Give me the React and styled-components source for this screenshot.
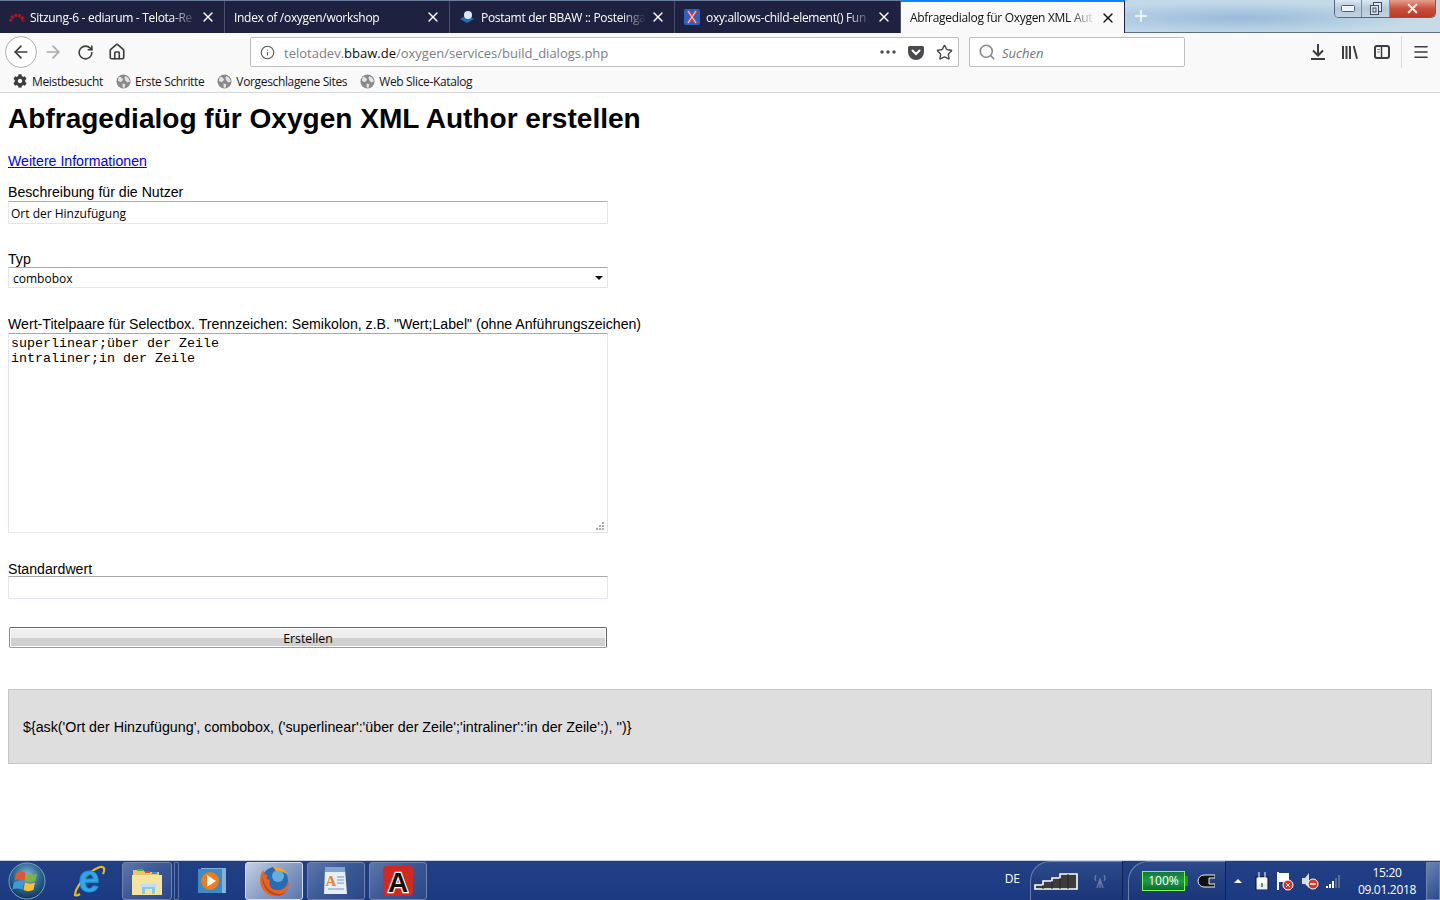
import React from 'react';
import styled, { createGlobalStyle } from 'styled-components';
import { ArrowLeft, ArrowRight, RotateCw, Home, Info, Star, Search, Menu, X, Plus } from 'lucide-react';
import { FaCog } from 'react-icons/fa';

const Global = createGlobalStyle`
    html, body { margin: 0; padding: 0; height: 100%; overflow: hidden; background: #fff; }
    #root { height: 100%; }
    * { box-sizing: border-box; }
`;

const uiFont = `"Open Sans", "Noto Sans", sans-serif`;
const pageFont = `"Liberation Sans", Arial, sans-serif`;

const Screen = styled.div`
    height: 900px;
    width: 1440px;
    display: flex;
    flex-direction: column;
    position: relative;
    overflow: hidden;
    font-family: ${pageFont};
`;

/* ---------- tab strip ---------- */
const TabStrip = styled.div`
    height: 33px;
    flex: none;
    display: flex;
    background:
        radial-gradient(ellipse 180px 16px at 1240px 18px, rgba(120,160,205,.55), transparent),
        linear-gradient(90deg, #a9c9e8 0%, #bcd6ec 60%, #c6dbe6 100%);
    border-bottom: 1px solid #5d6b8c;
`;
const TabRow = styled.div`
    display: flex;
    background: #1e2240;
    border-top: 1px solid #6b7d9d;
    height: 33px;
`;
const Tab = styled.div`
    width: ${p => p.$w || 225}px;
    height: ${p => (p.$active ? 33 : 32)}px;
    margin-top: ${p => (p.$active ? -1 : 0)}px;
    display: flex;
    align-items: center;
    padding: 0 8px 0 9px;
    font-family: ${uiFont};
    font-size: 12px;
    letter-spacing: -0.3px;
    color: ${p => (p.$active ? '#111' : '#fff')};
    background: ${p => (p.$active ? '#f9f9fa' : 'transparent')};
    border-top: ${p => (p.$active ? '2px solid #0a84ff' : 'none')};
    border-right: 1px solid ${p => (p.$active ? '#1e2240' : '#4a4f6c')};
`;
const TabFav = styled.span`
    width: 16px;
    height: 16px;
    flex: none;
    margin-right: ${p => p.$mr || 5}px;
    display: flex;
    align-items: center;
    justify-content: center;
`;
const TabTitle = styled.span`
    flex: 1;
    min-width: 0;
    overflow: hidden;
    white-space: nowrap;
    -webkit-mask-image: linear-gradient(90deg, #000 85%, transparent 100%);
    mask-image: linear-gradient(90deg, #000 85%, transparent 100%);
`;
const TabClose = styled(X)`
    flex: none;
    margin-left: 4px;
    color: ${p => (p.$dark ? '#111' : '#fff')};
`;
const NewTab = styled(Plus)`
    color: #fff;
    margin: 7px 0 0 7px;
`;
const WindowButtons = styled.div`
    position: absolute;
    top: 0;
    right: 4px;
    width: 102px;
    height: 18px;
    display: flex;
    border: 1px solid #56687f;
    border-top: none;
    border-radius: 0 0 5px 5px;
    overflow: hidden;
`;
const WinBtn = styled.div`
    height: 100%;
    width: ${p => p.$w}px;
    display: flex;
    align-items: center;
    justify-content: center;
    border-right: 1px solid #7b8da3;
    background: ${p => (p.$close
        ? 'linear-gradient(#e5a08e, #c9503c 50%, #b93b28)'
        : 'linear-gradient(#dbe7f2, #b6c8d9 50%, #c3d3e1)')};
    &:last-child { border-right: none; }
`;

/* ---------- toolbar ---------- */
const NavBar = styled.div`
    height: 35px;
    flex: none;
    display: flex;
    align-items: center;
    background: #f9f9fa;
    padding-top: 3px;
`;
const NavButtons = styled.div`
    width: 250px;
    flex: none;
    display: flex;
    align-items: center;
    padding-left: 5px;
    color: #3d3d3f;
`;
const BackBtn = styled.div`
    width: 32px;
    height: 32px;
    border: 1px solid #b1b1b3;
    border-radius: 50%;
    background: #fff;
    display: flex;
    align-items: center;
    justify-content: center;
`;
const NavIcon = styled.div`
    width: 32px;
    height: 32px;
    display: flex;
    align-items: center;
    justify-content: center;
    color: ${p => (p.$off ? '#a9a9ab' : 'inherit')};
`;
const Field = styled.div`
    height: 30px;
    width: ${p => p.$w}px;
    flex: none;
    background: #fff;
    border: 1px solid #bebebf;
    border-radius: 2px;
    display: flex;
    align-items: center;
    font-family: ${uiFont};
    font-size: 13px;
    color: #3d3d3f;
`;
const UrlInfo = styled(Info)`
    margin: 0 9px 0 9px;
    color: #555;
    flex: none;
`;
const UrlText = styled.div`
    flex: 1;
    padding-top: 2px;
    color: #7d7d85;
    white-space: nowrap;
    b { font-weight: 400; color: #0c0c0d; }
`;
const UrlAction = styled.div`
    width: 28px;
    display: flex;
    justify-content: center;
    color: #4a4a4f;
`;
const SearchBar = styled(Field)`
    margin-left: 10px;
    padding-left: 8px;
    font-style: italic;
    color: #73737b;
    gap: 6px;
`;
const SearchLabel = styled.span`
    padding-top: 2px;
`;
const RightIcons = styled.div`
    flex: 1;
    display: flex;
    align-items: center;
    padding-left: 117px;
    color: #3d3d3f;
`;
const RightIcon = styled.div`
    width: 32px;
    display: flex;
    justify-content: center;
`;
const ToolSep = styled.div`
    width: 1px;
    height: 32px;
    background: #dcdcde;
    margin: 0 3px;
`;

/* ---------- bookmarks ---------- */
const Bookmarks = styled.div`
    height: 25px;
    flex: none;
    display: flex;
    align-items: center;
    gap: 13px;
    padding: 2px 0 0 13px;
    background: #f9f9fa;
    border-bottom: 1px solid #d9d9db;
    font-family: ${uiFont};
    font-size: 12px;
    letter-spacing: -0.35px;
    color: #16161a;
`;
const Mark = styled.div`
    display: flex;
    align-items: center;
    gap: 4px;
`;
const GearMark = styled(Mark)`
    gap: 5px;
`;

/* ---------- page ---------- */
const Page = styled.main`
    flex: 1;
    min-height: 0;
    padding: 9px 8px 8px;
    font-size: 14.15px;
    color: #000;
    background: #fff;
`;
const Heading = styled.h1`
    margin: 0 0 18px;
    font-size: 28.05px;
    line-height: 33px;
    font-weight: 700;
`;
const MoreLink = styled.a`
    display: block;
    color: #0000ee;
    text-decoration: underline;
    line-height: 17px;
    margin-bottom: 14px;
`;
const Label = styled.label`
    display: block;
    line-height: 17px;
    height: ${p => p.$h || 17}px;
    margin-top: ${p => p.$gap || 0}px;
`;
const fieldBorder = `
    border: 1px solid #e3e6ec;
    border-top-color: #a9a9ad;
    border-left-color: #e3e6ec;
    border-radius: 1px;
    background: #fff;
    outline: none;
`;
const TextInput = styled.input`
    display: block;
    width: 600px;
    height: 23px;
    padding: 2px 2px 0;
    font-family: ${uiFont};
    font-size: 12px;
    color: #000;
    ${fieldBorder}
`;
const Combo = styled.div`
    width: 600px;
    height: 21px;
    padding: 1px 4px 0;
    display: flex;
    align-items: center;
    justify-content: space-between;
    font-family: ${uiFont};
    font-size: 12px;
    color: #000;
    ${fieldBorder}
`;
const ComboArrow = styled.span`
    width: 0;
    height: 0;
    border-left: 4px solid transparent;
    border-right: 4px solid transparent;
    border-top: 4px solid #111;
`;
const Area = styled.textarea`
    display: block;
    width: 600px;
    height: 200px;
    padding: 2px;
    resize: both;
    font-family: "Liberation Mono", "Courier New", monospace;
    font-size: 13.33px;
    line-height: 15px;
    color: #000;
    ${fieldBorder}
    &::-webkit-resizer {
        background-color: #fff;
        background-repeat: no-repeat;
        background-size: 2px 2px;
        background-image:
            linear-gradient(#aaa, #aaa), linear-gradient(#aaa, #aaa), linear-gradient(#aaa, #aaa),
            linear-gradient(#aaa, #aaa), linear-gradient(#aaa, #aaa), linear-gradient(#aaa, #aaa);
        background-position: 10px 5px, 10px 8px, 10px 11px, 7px 8px, 7px 11px, 4px 11px;
    }
`;
const SubmitBtn = styled.button`
    display: block;
    width: 598px;
    height: 21px;
    margin: 28px 0 0 1px;
    padding: 1px 0 0;
    border: 1px solid #666;
    border-left-color: #8c8c8c;
    border-bottom-color: #9a9a9a;
    border-radius: 2px;
    box-shadow: inset 0 0 0 1px #fff;
    background: linear-gradient(#f1f1f1 0%, #ececec 50%, #d2d2d2 50%, #cdcdcd 100%);
    font-family: ${uiFont};
    font-size: 12.3px;
    color: #000;
`;
const Result = styled.div`
    height: 75px;
    margin-top: 41px;
    padding: 0 14px;
    display: flex;
    align-items: center;
    font-size: 14.25px;
    background: #dedede;
    border: 1px solid #c6c6c6;
`;

/* ---------- taskbar ---------- */
const Taskbar = styled.footer`
    height: 40px;
    flex: none;
    display: flex;
    align-items: center;
    position: relative;
    border-top: 1px solid #c9d3e2;
    background: linear-gradient(#223f83, #1f3d85 50%, #1c3a82);
    color: #fff;
    font-family: ${uiFont};
`;
const Orb = styled.div`
    width: 38px;
    height: 38px;
    margin-left: 8px;
    flex: none;
`;
const Loose = styled.div`
    width: 38px;
    display: flex;
    justify-content: center;
    margin-left: ${p => p.$ml}px;
    flex: none;
`;
const TaskBtn = styled.div`
    width: ${p => p.$w || 58}px;
    height: 38px;
    margin-left: ${p => p.$ml || 4}px;
    flex: none;
    display: flex;
    align-items: center;
    justify-content: center;
    border: 1px solid ${p => (p.$active ? '#d6deec' : '#6f83ae')};
    border-radius: 3px;
    background: ${p => (p.$active
        ? 'linear-gradient(135deg, #c3cfe4 0%, #8fa3c8 45%, #5a76ad 100%)'
        : 'linear-gradient(135deg, #5d77ab 0%, #3e5a97 45%, #2a4889 100%)')};
`;
const Divider = styled.div`
    width: 5px;
    height: 38px;
    margin-left: 2px;
    flex: none;
    border: 1px solid #5c73a3;
    border-radius: 1px;
`;
const TrayArea = styled.div`
    margin-left: auto;
    display: flex;
    align-items: center;
    height: 100%;
`;
const Lang = styled.div`
    font-size: 12px;
    margin-right: 10px;
    padding-bottom: 5px;
`;
const Gadget = styled.div`
    width: ${p => p.$w}px;
    height: 39px;
    margin-right: ${p => p.$mr || 0}px;
    display: flex;
    align-items: center;
    padding-left: ${p => p.$pl}px;
    gap: ${p => p.$gap || 0}px;
    border-left: 1px solid #6c80a8;
    border-right: 1px solid #10224f;
    border-top: 1px solid #6c80a8;
    border-radius: 20px 0 0 0;
    background: linear-gradient(180deg, #2d4a8b, #1a3578);
`;
const Battery = styled.div`
    width: 43px;
    height: 20px;
    flex: none;
    border: 1px solid #74ff3a;
    background: linear-gradient(#0f7a3a, #1d9b4e 50%, #0c6a30);
    font-size: 12px;
    text-align: center;
    line-height: 18px;
    color: #fff;
    position: relative;
    &::after {
        content: '';
        position: absolute;
        right: -4px;
        top: 4px;
        width: 3px;
        height: 10px;
        background: #2a8f2a;
    }
`;
const TrayIcons = styled.div`
    display: flex;
    align-items: center;
    gap: 7px;
    width: 122px;
    padding-left: 8px;
`;
const Clock = styled.div`
    width: 78px;
    text-align: center;
    font-size: 12px;
    line-height: 17px;
    letter-spacing: -0.3px;
`;
const ShowDesktop = styled.div`
    width: 14px;
    height: 38px;
    border: 1px solid #6f83ae;
    background: linear-gradient(135deg, #6b84b4, #2d4a8c);
`;
const TrayUp = styled.span`
    width: 0;
    height: 0;
    margin-right: 6px;
    border-left: 4px solid transparent;
    border-right: 4px solid transparent;
    border-bottom: 4px solid #fff;
`;

/* ---------- drawn icons ---------- */
const Globe = () => (
    <svg width="15" height="15" viewBox="0 0 16 16">
        <circle cx="8" cy="8" r="7.5" fill="#8a8a8c" />
        <path d="M3 3c2 0 3 1 4 2s0 2-1 3-3 0-4-1zM10 2l3 2 2 4-3 1-2-2-1-3zM7 10l3 1-1 4-2-1z" fill="#e4e4e4" />
    </svg>
);
const Redmine = () => (
    <svg width="18" height="14" viewBox="0 0 18 14">
        <path d="M2 12a7 7 0 0 1 14 0" fill="none" stroke="#b01822" strokeWidth="3.5" strokeDasharray="3 1" />
    </svg>
);
const Postbox = () => (
    <svg width="16" height="16" viewBox="0 0 16 16">
        <path d="M1 10l7-4 7 4-7 4z" fill="#1f6fb5" />
        <circle cx="9" cy="6" r="4" fill="#dfe7ee" />
    </svg>
);
const OxyIcon = () => (
    <svg width="16" height="16" viewBox="0 0 16 16">
        <rect width="16" height="16" rx="2" fill="#2a62c8" />
        <path d="M4 2l8 12M12 2L4 14" stroke="#f04a30" strokeWidth="2.6" />
        <path d="M4 2l8 12M12 2L4 14" stroke="#fff" strokeWidth=".8" />
    </svg>
);
const Pocket = () => (
    <svg width="16" height="15" viewBox="0 0 16 15">
        <path d="M1.500 1h13A1.500 1.500 0 0 1 16 2.500V7A8 8 0 0 1 0 7V2.500A1.500 1.500 0 0 1 1.500 1z" fill="#4a4a4f" />
        <path d="M4.500 5.500L8 9l3.500-3.500" fill="none" stroke="#fff" strokeWidth="2" strokeLinecap="round" />
    </svg>
);
const Dots = () => (
    <svg width="16" height="4" viewBox="0 0 16 4">
        <circle cx="2" cy="2" r="1.700" fill="#4a4a4f" />
        <circle cx="8" cy="2" r="1.700" fill="#4a4a4f" />
        <circle cx="14" cy="2" r="1.700" fill="#4a4a4f" />
    </svg>
);
const DownArrow = () => (
    <svg width="14" height="16" viewBox="0 0 14 16" fill="none" stroke="#3d3d3f" strokeWidth="2">
        <path d="M7 0v11M2 6.500L7 11.500l5-5M0 15h14" />
    </svg>
);
const Library = () => (
    <svg width="16" height="14" viewBox="0 0 16 14" fill="#3d3d3f">
        <rect x="0" y="1" width="2" height="13" />
        <rect x="3.500" y="1" width="2" height="13" />
        <rect x="7" y="1" width="2" height="13" />
        <path d="M10.800 1.300l1.800-.6 3.400 12.700-1.900.6z" />
    </svg>
);
const Sidebar = () => (
    <svg width="16" height="14" viewBox="0 0 16 14" fill="none" stroke="#3d3d3f">
        <rect x="1" y="1" width="14" height="12" rx="2" strokeWidth="2" />
        <path d="M7.500 1v12" strokeWidth="1.500" />
        <path d="M3 4.500h3M3 7h3" stroke="#8a8a8c" />
    </svg>
);
const MinGlyph = () => (
    <svg width="14" height="7" viewBox="0 0 14 7">
        <rect x=".5" y=".5" width="13" height="6" rx="1" fill="#eef3f8" stroke="#4d5c6e" />
    </svg>
);
const RestoreGlyph = () => (
    <svg width="12" height="13" viewBox="0 0 12 13" fill="none" stroke="#3f4c5c">
        <rect x="3.500" y=".5" width="8" height="9" fill="#dfe8f1" />
        <rect x=".5" y="3.500" width="8" height="9" fill="#dfe8f1" />
        <rect x="3" y="6" width="3" height="4" />
    </svg>
);
const WinOrb = () => (
    <svg width="38" height="38" viewBox="0 0 38 38">
        <defs>
            <radialGradient id="orb" cx="50%" cy="35%" r="65%">
                <stop offset="0" stopColor="#8fb8d8" />
                <stop offset=".55" stopColor="#2c6a96" />
                <stop offset="1" stopColor="#0d3658" />
            </radialGradient>
        </defs>
        <circle cx="19" cy="19" r="18" fill="url(#orb)" stroke="#7fa3bf" />
        <path d="M8 11c3.500-2 7-2 10 0l-1.500 7.500c-3.500-1.500-7-1.500-10 0z" fill="#e4572e" />
        <path d="M19 11.500c3.500 1.500 7 1.500 10 0l-1.500 7.500c-3.500 1.500-7 1.500-10 0z" fill="#7cb342" />
        <path d="M6 20c3.500-1.500 7-1.500 10 0l-1.500 7.500c-3.500-1.500-7-1.500-10 0z" fill="#3d9bdc" />
        <path d="M17 20.500c3.500 1.500 7 1.500 10 0l-1.500 7.500c-3.500 1.500-7 1.500-10 0z" fill="#fbc02d" />
    </svg>
);
const IeIcon = () => (
    <svg width="34" height="32" viewBox="0 0 34 32" overflow="visible">
        <path d="M4 30C0 27 15 6 28 2c5-1 5 3 3 7" fill="none" stroke="#e8b923" strokeWidth="2.200" />
        <text x="17" y="27" textAnchor="middle" fontFamily="Liberation Sans" fontWeight="700" fontSize="38" fill="#2fa8ea" stroke="#1f8fd6" strokeWidth=".8">e</text>
        <path d="M3 29c-1 2 2 2 5 0" fill="none" stroke="#e8b923" strokeWidth="2.200" />
    </svg>
);
const Explorer = () => (
    <svg width="32" height="30" viewBox="0 0 32 30">
        <path d="M2 4h10l2 2h14v8H2z" fill="#e8c766" />
        <rect x="6" y="3" width="6" height="2" fill="#46b04a" />
        <rect x="14" y="5" width="5" height="2" fill="#d9473a" />
        <rect x="21" y="6" width="5" height="2" fill="#3f8fd6" />
        <path d="M1 9h30v20H1z" fill="#f5e3a0" />
        <path d="M11 28v-8h13v8h-3v-5h-7v5z" fill="#8fc7e8" />
        <rect x="9" y="18" width="17" height="3" fill="#bfe0f2" />
    </svg>
);
const MediaIcon = () => (
    <svg width="28" height="28" viewBox="0 0 28 28">
        <rect x="3" y="1" width="25" height="25" fill="#7fb3d8" />
        <rect x="0" y="2" width="24" height="24" fill="#3d8ac4" />
        <circle cx="12" cy="14" r="9" fill="#f07d1a" />
        <path d="M9 8l9 6-9 6z" fill="#fff" />
    </svg>
);
const Firefox = () => (
    <svg width="32" height="32" viewBox="0 0 32 32">
        <circle cx="17" cy="15" r="13" fill="#2a6bb5" />
        <circle cx="20" cy="11" r="6" fill="#63aee0" />
        <path d="M5 5C0 13 1 28 15 31c10 1 17-7 16-16-1 6-6 11-12 10-6 0-9-5-7-10-4 0-4-3-2-5-3 0-4-2-5-5z" fill="#e8641b" />
        <path d="M4 11c2 9 7 17 17 18 4 0 7-2 9-5-3 6-9 8-14 6C9 28 4 20 4 11z" fill="#c8401a" />
        <path d="M15 2c6-1 12 2 15 8-4-3-8-5-12-4z" fill="#f5a623" />
    </svg>
);
const NotesIcon = () => (
    <svg width="26" height="30" viewBox="0 0 26 30">
        <path d="M2 3h20l2 25H1z" fill="#e7eef6" />
        <rect x="2" y="1" width="20" height="5" fill="#7ea6cf" />
        <text x="8" y="20" textAnchor="middle" fontFamily="Liberation Serif" fontWeight="700" fontSize="15" fill="#e8842a">A</text>
        <path d="M14 11h7M14 14h7M14 17h7M5 23h16" stroke="#6a9ed0" />
    </svg>
);
const AcrobatIcon = () => (
    <svg width="30" height="30" viewBox="0 0 30 30" overflow="visible">
        <rect width="30" height="30" rx="4" fill="#d2281e" />
        <text x="15" y="26" textAnchor="middle" fontFamily="Liberation Sans" fontWeight="700" fontSize="28" fill="#111" stroke="#fff" strokeWidth="2.400" paintOrder="stroke">A</text>
    </svg>
);
const NetBars = () => (
    <svg width="44" height="18" viewBox="0 0 44 18">
        <path d="M1 17v-4h8V9h9V6h8V2h17v15z" fill="#3d3d3d" stroke="#fff" strokeWidth="1.600" />
        <path d="M9 17V13M18 17V9M26 17V6M34 17V2" stroke="#222" />
    </svg>
);
const Antenna = () => (
    <svg width="16" height="16" viewBox="0 0 16 16" fill="none" stroke="#6b7c9c" strokeWidth="1.300">
        <path d="M8 6v9M5 15l3-9 3 9M4 2Q2 5 4 8M12 2q2 3 0 6" />
    </svg>
);
const Plug = () => (
    <svg width="18" height="14" viewBox="0 0 18 14">
        <path d="M7 1h11v3h-6v6h6v3H7a6 6 0 0 1 0-12z" fill="#111" stroke="#eee" />
    </svg>
);
const TrayPlug = () => (
    <svg width="14" height="18" viewBox="0 0 14 18">
        <rect x="1" y="5" width="12" height="13" fill="#eee" stroke="#111" />
        <path d="M4 0v6M10 0v6M3 6h8v5H3z" stroke="#fff" fill="#fff" />
        <path d="M7 11v4" stroke="#111" />
    </svg>
);
const Flag = () => (
    <svg width="18" height="20" viewBox="0 0 18 20">
        <path d="M2 1v18" stroke="#fff" strokeWidth="2" />
        <path d="M3 2h10v9H3z" fill="#fff" />
        <circle cx="12" cy="14" r="5" fill="#d9342b" stroke="#fff" />
        <path d="M10 12l4 4M14 12l-4 4" stroke="#fff" />
    </svg>
);
const Speaker = () => (
    <svg width="18" height="18" viewBox="0 0 18 18">
        <path d="M1 6h3l4-5v15l-4-4H1z" fill="#ddd" />
        <circle cx="12" cy="12" r="5" fill="#d9342b" stroke="#fff" />
        <path d="M9 12h6" stroke="#fff" strokeWidth="1.500" />
    </svg>
);
const Signal = () => (
    <svg width="16" height="14" viewBox="0 0 16 14">
        <path d="M0 12h2v2H0zM3 10h2v4H3zM6 7h2v7H6z" fill="#fff" />
        <path d="M9 4h2v10H9zM12 1h2v13h-2z" fill="#5a6c8f" />
    </svg>
);

// titles are cut by the tab width in the browser, only the visible part is kept
const tabs = [
    { title: 'Sitzung-6 - ediarum - Telota-Re', icon: <Redmine />, w: 225 },
    { title: 'Index of /oxygen/workshop', w: 225 },
    { title: 'Postamt der BBAW :: Posteinga', icon: <Postbox />, w: 225, mr: 6 },
    { title: 'oxy:allows-child-element() Fun', icon: <OxyIcon />, w: 226, mr: 6 },
    { title: 'Abfragedialog für Oxygen XML Aut', w: 224, active: true },
];

const bookmarks = ['Erste Schritte', 'Vorgeschlagene Sites', 'Web Slice-Katalog'];

export default function App() {
    return (
        <Screen>
            <Global />
            <TabStrip>
                <TabRow>
                    {tabs.map((t) => (
                        <Tab key={t.title} $w={t.w} $active={t.active}>
                            {t.icon ? <TabFav $mr={t.mr}>{t.icon}</TabFav> : null}
                            <TabTitle>{t.title}</TabTitle>
                            <TabClose size={16} strokeWidth={2} $dark={t.active} />
                        </Tab>
                    ))}
                </TabRow>
                <NewTab size={18} strokeWidth={2} />
            </TabStrip>
            <WindowButtons>
                <WinBtn $w={28}><MinGlyph /></WinBtn>
                <WinBtn $w={28}><RestoreGlyph /></WinBtn>
                <WinBtn $w={46} $close><X size={15} color="#f3e9e4" strokeWidth={3.500} /></WinBtn>
            </WindowButtons>

            <NavBar>
                <NavButtons>
                    <BackBtn><ArrowLeft size={20} strokeWidth={2} /></BackBtn>
                    <NavIcon $off><ArrowRight size={20} strokeWidth={2} /></NavIcon>
                    <NavIcon><RotateCw size={17} strokeWidth={2.200} /></NavIcon>
                    <NavIcon><Home size={18} strokeWidth={2.200} /></NavIcon>
                </NavButtons>
                <Field $w={709}>
                    <UrlInfo size={15} strokeWidth={1.800} />
                    <UrlText>telotadev.<b>bbaw.de</b>/oxygen/services/build_dialogs.php</UrlText>
                    <UrlAction><Dots /></UrlAction>
                    <UrlAction><Pocket /></UrlAction>
                    <UrlAction><Star size={17} strokeWidth={2} /></UrlAction>
                </Field>
                <SearchBar $w={216}>
                    <Search size={18} color="#8a8a8c" strokeWidth={2.200} />
                    <SearchLabel>Suchen</SearchLabel>
                </SearchBar>
                <RightIcons>
                    <RightIcon><DownArrow /></RightIcon>
                    <RightIcon><Library /></RightIcon>
                    <RightIcon><Sidebar /></RightIcon>
                    <ToolSep />
                    <RightIcon><Menu size={18} strokeWidth={2.200} /></RightIcon>
                </RightIcons>
            </NavBar>
            <Bookmarks>
                <GearMark><FaCog size={14} color="#3d3d3f" />Meistbesucht</GearMark>
                {bookmarks.map((b) => (
                    <Mark key={b}><Globe />{b}</Mark>
                ))}
            </Bookmarks>

            <Page>
                <Heading>Abfragedialog für Oxygen XML Author erstellen</Heading>
                <MoreLink href="#">Weitere Informationen</MoreLink>

                <Label>Beschreibung für die Nutzer</Label>
                <TextInput readOnly value="Ort der Hinzufügung" />

                <Label $gap={27} $h={16}>Typ</Label>
                <Combo>combobox<ComboArrow /></Combo>

                <Label $gap={28}>Wert-Titelpaare für Selectbox. Trennzeichen: Semikolon, z.B. "Wert;Label" (ohne Anführungszeichen)</Label>
                <Area readOnly value={'superlinear;über der Zeile\nintraliner;in der Zeile'} />

                <Label $gap={28} $h={15}>Standardwert</Label>
                <TextInput readOnly value="" />

                <SubmitBtn>Erstellen</SubmitBtn>
                <Result>{"${ask('Ort der Hinzufügung', combobox, ('superlinear':'über der Zeile';'intraliner':'in der Zeile';), '')}"}</Result>
            </Page>

            <Taskbar>
                <Orb><WinOrb /></Orb>
                <Loose $ml={24}><IeIcon /></Loose>
                <TaskBtn $w={50} $ml={14}><Explorer /></TaskBtn>
                <Divider />
                <Loose $ml={14}><MediaIcon /></Loose>
                <TaskBtn $active $ml={14}><Firefox /></TaskBtn>
                <TaskBtn><NotesIcon /></TaskBtn>
                <TaskBtn><AcrobatIcon /></TaskBtn>
                <TrayArea>
                    <Lang>DE</Lang>
                    <Gadget $w={93} $mr={5} $pl={3} $gap={14}><NetBars /><Antenna /></Gadget>
                    <Gadget $w={98} $pl={13} $gap={12}><Battery>100%</Battery><Plug /></Gadget>
                    <TrayIcons>
                        <TrayUp />
                        <TrayPlug />
                        <Flag />
                        <Speaker />
                        <Signal />
                    </TrayIcons>
                    <Clock>15:20<br />09.01.2018</Clock>
                    <ShowDesktop />
                </TrayArea>
            </Taskbar>
        </Screen>
    );
}
